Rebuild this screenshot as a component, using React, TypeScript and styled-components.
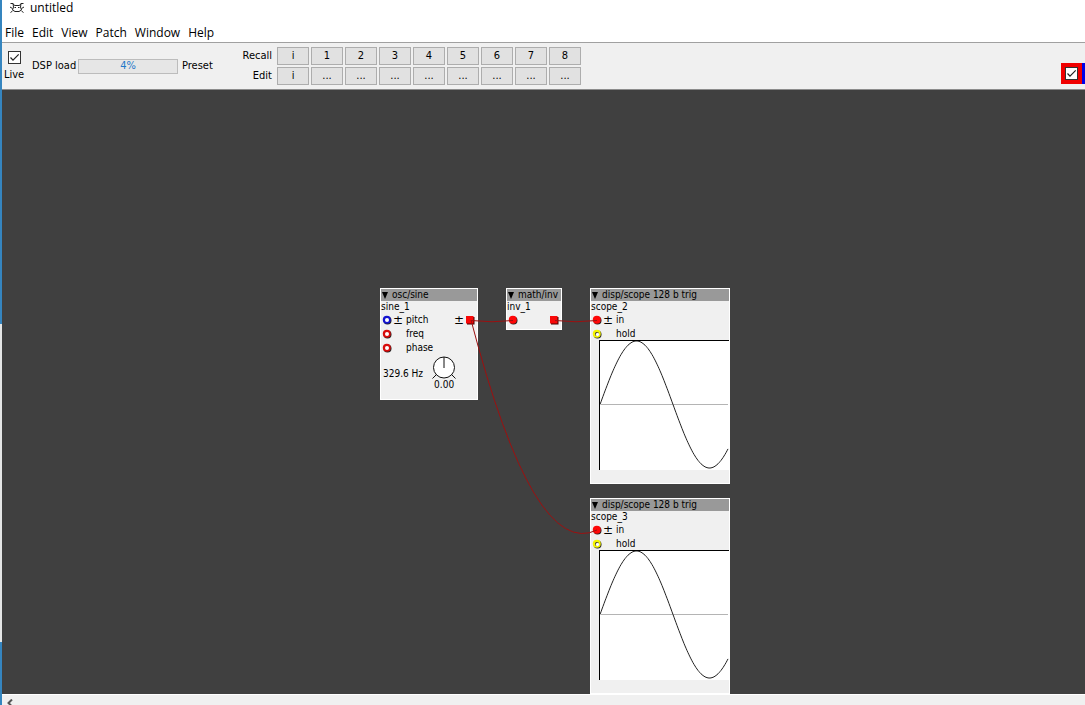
import React from 'react';
import styled, { createGlobalStyle } from 'styled-components';

const GlobalStyle = createGlobalStyle`
  *, *::before, *::after { box-sizing: border-box; }
  body {
    margin: 0;
    color: #000;
    background: #fff;
    font: 11px/14px "DejaVu Sans Condensed", "DejaVu Sans", sans-serif;
  }
  button, input { font: inherit; color: inherit; margin: 0; padding: 0; }
  svg { display: block; }
`;

const Shell = styled.div`
  display: flex;
  height: 100vh;
  overflow: hidden;
`;

const WindowEdge = styled.div`
  flex: none;
  width: 2px;
  background: linear-gradient(#3585bf 46%, #e4e6e6 46%, #e4e6e6 91%, #3585bf 91%);
`;

const Window = styled.div`
  flex: 1;
  min-width: 0;
  display: flex;
  flex-direction: column;
`;

const TitleBar = styled.header`
  display: flex;
  align-items: center;
  gap: 6px;
  height: 16px;
  padding-left: 8px;
`;

const Title = styled.h1`
  margin: 0;
  font: 400 12px/16px "Open Sans", sans-serif;
`;

const MenuBar = styled.nav`
  display: flex;
  align-items: center;
  gap: 8px;
  height: 26px;
  padding: 8px 0 0 3px;
`;

const MenuButton = styled.button`
  border: 0;
  background: none;
  && { font: 12px/16px "Open Sans", sans-serif; }
`;

const Toolbar = styled.div`
  flex: none;
  display: flex;
  align-items: center;
  height: 48px;
  background: #f0f0f0;
  border-top: 1px solid #a0a0a0;
  border-bottom: 1px solid #8c8c8c;
`;

const LiveField = styled.label`
  display: flex;
  flex-direction: column;
  align-items: center;
  gap: 4px;
  width: 24px;
`;

const CheckFrame = styled.span`
  position: relative;
  flex: none;
  display: block;
  width: 13px;
  height: 13px;
  svg { position: absolute; inset: 0; pointer-events: none; }
`;

const CheckInput = styled.input`
  appearance: none;
  display: block;
  width: 13px;
  height: 13px;
  border: 1px solid #333;
  background: #fff;
`;

const LoadLabel = styled.span`
  margin-left: 6px;
  width: 46px;
  white-space: nowrap;
`;

const LoadMeter = styled.div`
  width: 100px;
  height: 15px;
  border: 1px solid #bcbcbc;
  background: #e6e6e6;
  color: #1f78c8;
  text-align: center;
  line-height: 12px;
`;

const PresetLabel = styled.span`
  margin-left: 4px;
  width: 50px;
`;

const PresetGrid = styled.div`
  display: grid;
  grid-template-columns: 38px repeat(9, 32px);
  grid-auto-rows: 18px;
  gap: 2px;
  margin-left: 5px;
`;

const PresetRowName = styled.span`
  padding-right: 3px;
  line-height: 18px;
  text-align: right;
`;

const PresetButton = styled.button`
  border: 1px solid #adadad;
  background: #e1e1e1;
  line-height: 16px;
`;

const Monitor = styled.div`
  display: flex;
  margin: 15px 0 0 auto;
`;

const MonitorCell = styled.span`
  height: 21px;
  padding: 4px;
  background: #f00000;
`;

const MonitorStripe = styled.span`
  width: 3px;
  background: #0000e8;
`;

const Canvas = styled.main`
  position: relative;
  flex: 1;
  min-height: 0;
  overflow: hidden;
  background: #404040;
`;

const Node = styled.section<{ $x: number; $y: number; $w: number; $h: number }>`
  position: absolute;
  left: ${p => p.$x}px;
  top: ${p => p.$y}px;
  width: ${p => p.$w}px;
  height: ${p => p.$h}px;
  border: 1px solid #fff;
  background: #f0f0f0;
  font-size: 10px;
  line-height: 12px;
  white-space: nowrap;
`;

const NodeTitle = styled.h2`
  display: flex;
  align-items: center;
  gap: 4px;
  height: 12px;
  margin: 0;
  padding-left: 1px;
  background: #999;
  font-size: 10px;
  font-weight: 400;
  line-height: 14px;
`;

const NodeName = styled.div`
  height: 12px;
`;

const PortRow = styled.div`
  display: flex;
  align-items: center;
  height: 14px;
  padding: 0 2px 0 1px;
`;

const Sign = styled.span`
  width: 14px;
  padding-left: 1px;
  font: 12px/12px "DejaVu Sans", sans-serif;
`;

const OutSign = styled(Sign)`
  width: 12px;
  margin-left: auto;
`;

const OutSlot = styled.span`
  margin-left: auto;
`;

const DialRow = styled.div`
  display: flex;
  align-items: center;
  gap: 8px;
  padding: 1px 0 0 2px;
`;

const DialBox = styled.div`
  display: flex;
  flex-direction: column;
  align-items: center;
  width: 26px;
`;

const Plot = styled.div`
  height: 130px;
  margin: -1px 0 0 8px;
  border-top: 1px solid #000;
  border-left: 1px solid #000;
  background: #fff;
`;

const Wires = styled.svg`
  position: absolute;
  inset: 0;
  pointer-events: none;
`;

const ScrollTrack = styled.div`
  flex: none;
  height: 11px;
  overflow: hidden;
  border-top: 1px solid #fff;
  background: #f0f0f0;
`;

const ScrollButton = styled.button`
  display: flex;
  align-items: flex-start;
  width: 16px;
  height: 16px;
  padding: 4px 0 0 5px;
  border: 0;
  background: none;
`;

function Check({ label }: { label?: string }) {
  return (
    <CheckFrame>
      <CheckInput type="checkbox" defaultChecked aria-label={label} />
      <svg width="13" height="13" viewBox="0 0 13 13" fill="none" stroke="#222" strokeWidth="1.2">
        <path d="M2.5 6.5 5 9.2 10.7 3.3" />
      </svg>
    </CheckFrame>
  );
}

function AppIcon() {
  return (
    <svg width="14" height="12" viewBox="0 0 14 12" fill="none" stroke="#222" strokeWidth="1">
      <path d="M.5 1.500 3 1.500 4.500 3.500h5L11 1.500h2.500M3 1.500 3.500 5 2.500 8 5 9.500h4L11.500 8 10.500 5 11 1.500M0 5l2.500 1.500M14 5l-2.500 1.500M.5 10.500 2.500 9M13.500 10.500 11.500 9" />
      <path d="M4.500 5.500h1.500M8 5.500h1.500" />
    </svg>
  );
}

type Tone = 'red' | 'blue' | 'yellow';
const tones: Record<Tone, string> = { red: '#d80c0c', blue: '#1414d0', yellow: '#f4f400' };

function Inlet({ tone, wired }: { tone: Tone; wired?: boolean }) {
  return (
    <svg width="10" height="10" viewBox="0 0 10 10">
      <circle cx="5.500" cy="5.500" r="4" fill="#222" />
      <circle cx="4.800" cy="4.800" r="4" fill={wired ? '#ff0808' : tones[tone]} />
      {!wired && <circle cx="5" cy="5" r="2" fill={tone === 'yellow' ? '#333' : '#fff'} />}
      {!wired && tone === 'yellow' && <circle cx="5.500" cy="5.500" r="1.700" fill="#fff" />}
    </svg>
  );
}

function Outlet() {
  return (
    <svg width="10" height="10" viewBox="0 0 10 10">
      <rect x="2" y="2" width="7.500" height="7.500" fill="#400" />
      <rect x="1" y="1" width="7.500" height="7.500" fill="#f80808" />
    </svg>
  );
}

function NodeHead({ type, name }: { type: string; name: string }) {
  return (
    <>
      <NodeTitle>
        <svg width="6" height="7" viewBox="0 0 6 7"><path d="M0 0h6L3 7z" /></svg>
        {type}
      </NodeTitle>
      <NodeName>{name}</NodeName>
    </>
  );
}

const sinePath = Array.from({ length: 129 }, (_, i) => {
  const y = 63.5 - 63.5 * Math.sin((2 * Math.PI * i) / 146);
  return `${i ? 'L' : 'M'}${i} ${y.toFixed(1)}`;
}).join('');

function Scope({ x, y, name }: { x: number; y: number; name: string }) {
  return (
    <Node $x={x} $y={y} $w={140} $h={196}>
      <NodeHead type="disp/scope 128 b trig" name={name} />
      <PortRow><Inlet tone="red" wired /><Sign>±</Sign>in</PortRow>
      <PortRow><Inlet tone="yellow" /><Sign />hold</PortRow>
      <Plot>
        <svg width="129" height="129" viewBox="0 0 129 129" fill="none">
          <path d="M1 63.500h127" stroke="#b4b4b4" />
          <path d={sinePath} stroke="#222" />
        </svg>
      </Plot>
    </Node>
  );
}

const menus = ['File', 'Edit', 'View', 'Patch', 'Window', 'Help'];
const recall = ['i', '1', '2', '3', '4', '5', '6', '7', '8'];

export default function App() {
  return (
    <>
      <GlobalStyle />
      <Shell>
        <WindowEdge />
        <Window>
          <TitleBar><AppIcon /><Title>untitled</Title></TitleBar>
          <MenuBar>{menus.map(m => <MenuButton key={m}>{m}</MenuButton>)}</MenuBar>
          <Toolbar>
            <LiveField><Check />Live</LiveField>
            <LoadLabel>DSP load</LoadLabel>
            <LoadMeter role="meter" aria-label="DSP load" aria-valuenow={4} aria-valuemin={0} aria-valuemax={100}>4%</LoadMeter>
            <PresetLabel>Preset</PresetLabel>
            <PresetGrid>
              <PresetRowName>Recall</PresetRowName>
              {recall.map(r => <PresetButton key={r}>{r}</PresetButton>)}
              <PresetRowName>Edit</PresetRowName>
              {recall.map(r => <PresetButton key={r} aria-label={`Edit ${r}`}>{r === 'i' ? 'i' : '...'}</PresetButton>)}
            </PresetGrid>
            <Monitor>
              <MonitorCell><Check label="Monitor" /></MonitorCell>
              <MonitorStripe />
            </Monitor>
          </Toolbar>
          <Canvas>
            <Node $x={378} $y={198} $w={98} $h={112}>
              <NodeHead type="osc/sine" name="sine_1" />
              <PortRow><Inlet tone="blue" /><Sign>±</Sign>pitch<OutSign>±</OutSign><Outlet /></PortRow>
              <PortRow><Inlet tone="red" /><Sign />freq</PortRow>
              <PortRow><Inlet tone="red" /><Sign />phase</PortRow>
              <DialRow>
                329.6 Hz
                <DialBox>
                  <svg width="24" height="23" viewBox="0 0 24 23" fill="none" stroke="#111">
                    <circle cx="12" cy="11.500" r="10.500" fill="#fff" />
                    <path d="M12 1v11M4.500 18.500.500 22.500M19.500 18.500l4 4" />
                  </svg>
                  0.00
                </DialBox>
              </DialRow>
            </Node>
            <Node $x={504} $y={198} $w={56} $h={42}>
              <NodeHead type="math/inv" name="inv_1" />
              <PortRow><Inlet tone="red" wired /><OutSlot><Outlet /></OutSlot></PortRow>
            </Node>
            <Scope x={588} y={198} name="scope_2" />
            <Scope x={588} y={408} name="scope_3" />
            <Wires width="100%" height="100%" fill="none" stroke="#9c1010">
              <path d="M469 230.500Q490 233 511 230.500M553 230.500Q574 233 595 230.500M469 230Q532 471 595 440" />
            </Wires>
          </Canvas>
          <ScrollTrack>
            <ScrollButton aria-label="Scroll left">
              <svg width="6" height="8" viewBox="0 0 6 8" fill="none" stroke="#555" strokeWidth="2">
                <path d="M5 .500 1.500 4 5 7.500" />
              </svg>
            </ScrollButton>
          </ScrollTrack>
        </Window>
      </Shell>
    </>
  );
}
